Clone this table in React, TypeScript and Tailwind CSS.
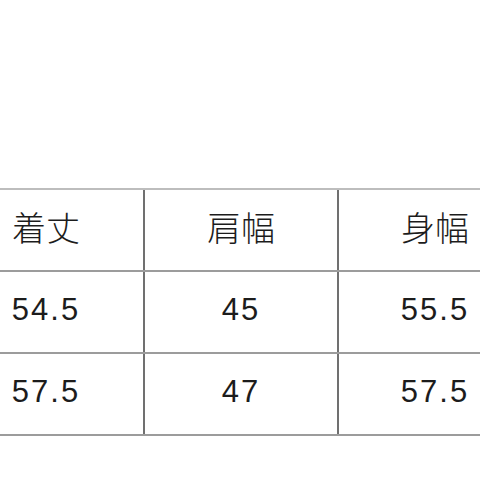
import React from "react";

const rows: string[][] = [
  ["着丈", "肩幅", "身幅"],
  ["54.5", "45", "55.5"],
  ["57.5", "47", "57.5"],
];

export default function App() {
  return (
    <div className="w-[480px] h-[480px] overflow-hidden bg-white">
      <div className="ml-[-51px] pt-[188px] w-[582px]">
        {rows.map((row, r) => (
          <div
            key={r}
            className={
              r === 0
                ? "flex h-[82px] border-t-2 border-[#bdbdbd]"
                : r === rows.length - 1
                  ? "flex h-[84px] border-t-2 border-b-2 border-[#9c9c9c]"
                  : "flex h-[82px] border-t-2 border-[#9c9c9c]"
            }
          >
            {row.map((cell, c) => (
              <div
                key={c}
                className={
                  c === 0
                    ? "w-[194px] flex items-center justify-center"
                    : "w-[194px] flex items-center justify-center border-l-2 border-[#707070]"
                }
              >
                {r === 0 ? (
                  <span className="text-[34px] leading-none text-[#1c1c1c] font-['Noto_Sans_CJK_JP',sans-serif] font-light pb-[6px]">
                    {cell}
                  </span>
                ) : (
                  <span className="text-[31px] leading-none tracking-[2px] text-[#1c1c1c] font-['Liberation_Sans',Arial,sans-serif] pb-[6px]">
                    {cell}
                  </span>
                )}
              </div>
            ))}
          </div>
        ))}
      </div>
    </div>
  );
}
